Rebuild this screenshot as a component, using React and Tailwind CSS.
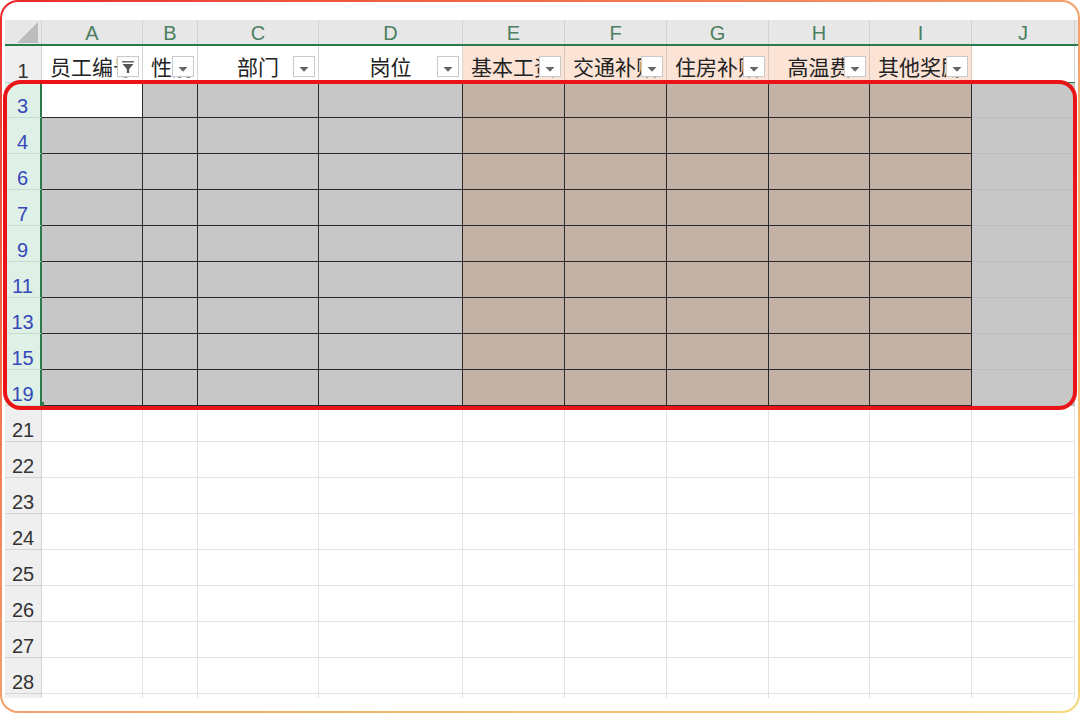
import React from "react";

const GRID =
  "grid grid-cols-[37px_101px_55px_121px_144px_102px_102px_102px_101px_102px_103px]";

const letters = ["A", "B", "C", "D", "E", "F", "G", "H", "I", "J"];

const headers = [
  { t: "员工编号", filter: true },
  { t: "性别" },
  { t: "部门", center: true },
  { t: "岗位", center: true },
  { t: "基本工资", pink: true },
  { t: "交通补贴", pink: true },
  { t: "住房补贴", pink: true },
  { t: "高温费", pink: true, center: true },
  { t: "其他奖励", pink: true },
  { t: "", none: true },
];

const selRows = [3, 4, 6, 7, 9, 11, 13, 15, 19];
const emptyRows = [21, 22, 23, 24, 25, 26, 27, 28];

function DropBtn({ filter }) {
  return (
    <div className="absolute right-[3px] bottom-[5px] w-[22px] h-[21px] bg-white border border-[#c9c9c9] flex items-center justify-center">
      {filter ? (
        <svg width="14" height="14" viewBox="0 0 14 14">
          <rect x="1" y="1" width="12" height="1.5" fill="#6b6b6b" />
          <polygon points="1.5,4 12.5,4 8.2,9 8.2,13 5.8,13 5.8,9" fill="#555" />
        </svg>
      ) : (
        <svg width="12" height="7" viewBox="0 0 12 7" className="mt-[5px]">
          <polygon points="1.5,1 10.5,1 6,5.8" fill="#666" />
        </svg>
      )}
    </div>
  );
}

export default function App() {
  return (
    <div
      className="w-[1080px] h-[713px] bg-white"
      style={{ fontFamily: '"Liberation Sans", "Noto Sans CJK SC", sans-serif' }}
    >
      <div className="w-[1080px] h-[713px] rounded-[18px] p-[2px] bg-linear-to-br from-[#e9262c] via-[#f3a06a] to-[#f6d877]">
        <div className="relative w-full h-full rounded-[16px] bg-white overflow-hidden pt-[18px] pl-[3px]">
          {/* column header */}
          <div className={`${GRID} h-[26px] bg-[#e7e7e7] border-b-2 border-[#2b7a4b]`}>
            <div className="relative border-r border-[#d2d2d2]">
              <svg width="22" height="22" viewBox="0 0 22 22" className="absolute left-[12px] top-[2px]">
                <polygon points="21,0 21,21 0,21" fill="#bcbcbc" />
              </svg>
            </div>
            {letters.map((l) => (
              <div
                key={l}
                className="flex items-center justify-center border-r border-[#d2d2d2] text-[20px] leading-none text-[#4b7f60] pt-[1px]"
              >
                {l}
              </div>
            ))}
          </div>

          {/* row 1 */}
          <div className={`${GRID} h-[36px]`}>
            <div className="flex items-end justify-center pb-[1px] leading-none bg-[#efefef] border-r border-[#d0d0d0] text-[20px] text-[#333]">
              1
            </div>
            {headers.map((h, i) => (
              <div
                key={i}
                className={`relative overflow-hidden whitespace-nowrap flex items-center text-[21px] leading-[24px] text-[#222] pt-[4px] border-r ${
                  h.pink ? "bg-[#fbe3d6] border-[#d7c6bc]" : "bg-white border-[#d6d6d6]"
                } ${h.center ? "justify-center" : "justify-start pl-[8px]"}`}
                style={{ fontFamily: '"Noto Sans CJK SC", sans-serif' }}
              >
                {h.t}
                {!h.none && <DropBtn filter={h.filter} />}
              </div>
            ))}
          </div>

          {/* selected data rows */}
          {selRows.map((r, ri) => (
            <div key={r} className={`${GRID} h-[36px]`}>
              <div
                className={`flex items-end justify-center pb-[1px] leading-none bg-[#dff0e7] border-r-2 border-r-[#2b7a4b] border-b border-b-[#c5ddd0] text-[20px] text-[#3448b8] ${
                  ri === 0 ? "border-t border-t-[#c5ddd0]" : ""
                }`}
              >
                {r}
              </div>
              {letters.map((l, ci) => {
                const isJ = ci === 9;
                const brown = ci >= 4 && ci <= 8;
                const white = ri === 0 && ci === 0;
                const bg = white ? "bg-white" : brown ? "bg-[#c5b2a6]" : "bg-[#c7c7c7]";
                const border = isJ
                  ? "border-b border-[#bdbdbd]"
                  : "border-r border-b border-[#2a2a2a]";
                return (
                  <div
                    key={l}
                    className={`${bg} ${border} ${ri === 0 ? "border-t border-t-[#2b7a4b]" : ""}`}
                  />
                );
              })}
            </div>
          ))}

          {/* empty rows */}
          {emptyRows.map((r) => (
            <div key={r} className={`${GRID} h-[36px]`}>
              <div className="flex items-end justify-center pb-[1px] leading-none bg-[#efefef] border-r border-b border-[#d4d4d4] text-[20px] text-[#333]">
                {r}
              </div>
              {letters.map((l) => (
                <div key={l} className="bg-white border-r border-b border-[#e3e3e3]" />
              ))}
            </div>
          ))}
          <div className={`${GRID} h-[4px]`}>
            <div className="bg-[#efefef] border-r border-[#d4d4d4]" />
            {letters.map((l) => (
              <div key={l} className="border-r border-[#e3e3e3]" />
            ))}
          </div>

          {/* fill handle */}
          <div className="absolute left-[38px] top-[400px] w-[4px] h-[5px] bg-[#2b7a4b]" />

          {/* red highlight overlay */}
          <div className="absolute left-[1px] top-[78px] w-[1074px] h-[330px] rounded-[18px] border-[4px] border-[#ea1317] pointer-events-none" />
        </div>
      </div>
    </div>
  );
}
